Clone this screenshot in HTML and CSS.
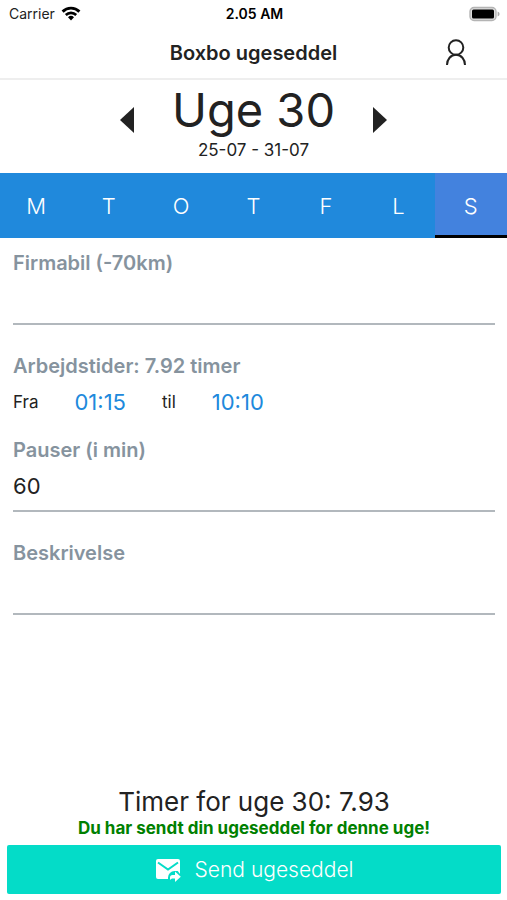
FILE: index.html
```html
<!DOCTYPE html>
<html lang="da">
<head>
<meta charset="utf-8">
<meta name="viewport" content="width=device-width, initial-scale=1">
<title>Boxbo ugeseddel</title>
<link rel="stylesheet" href="styles.css">
</head>
<body>
<div class="status">
  <div class="status-left">
    <span>Carrier</span>
    <svg class="wifi" viewBox="0 0 20 15" aria-hidden="true">
      <path d="M1.600 5.600a12 12 0 0 1 16.800 0" fill="none" stroke="#000" stroke-width="2.900"/>
      <path d="M4.800 9a7.400 7.400 0 0 1 10.400 0" fill="none" stroke="#000" stroke-width="2.600"/>
      <path d="M7 11.200a4.300 4.300 0 0 1 6 0L10 14.400z"/>
    </svg>
  </div>
  <span class="status-time">2.05 AM</span>
  <div class="status-right">
    <svg class="battery" viewBox="0 0 32 16" aria-hidden="true">
      <rect x="2" y="1.500" width="26" height="13" rx="4" fill="#ddd" stroke="#b4b4b4" stroke-width="1.400"/>
      <rect x="4" y="3.500" width="22" height="9" rx="1.500" fill="#000"/>
      <path d="M29.600 5.500q2 .8 2 2.500t-2 2.500z" fill="#aaa"/>
    </svg>
  </div>
</div>
<header class="header">
  <h1 class="title">Boxbo ugeseddel</h1>
  <button class="profile" aria-label="Profil">
    <svg viewBox="0 0 22 28" aria-hidden="true">
      <circle cx="11" cy="8.500" r="7.300"/>
      <path d="M2 26c0-5.800 3.800-10.200 9-10.200s9 4.400 9 10.200"/>
    </svg>
  </button>
</header>
<main class="main">
  <section class="week">
    <button class="arrow" aria-label="Forrige uge"><svg viewBox="0 0 14 26" aria-hidden="true"><path d="M14 0v26L0 13z"/></svg></button>
    <div class="week-text">
      <h2 class="week-name">Uge 30</h2>
      <p class="week-dates">25-07 - 31-07</p>
    </div>
    <button class="arrow" aria-label="Næste uge"><svg viewBox="0 0 14 26" aria-hidden="true"><path d="M0 0v26l14-13z"/></svg></button>
  </section>
  <nav class="days">
    <button class="day">M</button>
    <button class="day">T</button>
    <button class="day">O</button>
    <button class="day">T</button>
    <button class="day">F</button>
    <button class="day">L</button>
    <button class="day day-active">S</button>
  </nav>
  <form class="form">
    <div class="field">
      <label class="label" for="car">Firmabil (-70km)</label>
      <input class="input" id="car" type="text">
    </div>
    <div class="hours">
      <p class="label">Arbejdstider: 7.92 timer</p>
      <div class="times">
        <span>Fra</span>
        <button class="time" type="button">01:15</button>
        <span>til</span>
        <button class="time" type="button">10:10</button>
      </div>
    </div>
    <div class="field">
      <label class="label" for="breaks">Pauser (i min)</label>
      <input class="input" id="breaks" type="text" value="60">
    </div>
    <div class="field">
      <label class="label" for="description">Beskrivelse</label>
      <input class="input" id="description" type="text">
    </div>
  </form>
</main>
<footer class="footer">
  <p class="total">Timer for uge 30: 7.93</p>
  <p class="sent">Du har sendt din ugeseddel for denne uge!</p>
  <button class="send">
    <svg class="mail" viewBox="0 0 26 24" aria-hidden="true">
      <rect x="1" y="1" width="24" height="20" rx="2" fill="#fff"/>
      <path d="M3 4.500l10 7 10-7" fill="none" stroke="#04dcc8" stroke-width="2"/>
      <path d="M13 24v-4.500a6.500 6.500 0 0 1 6.500-6.500H26v11z" fill="#04dcc8"/>
      <path d="M22 12h3v4z" fill="#fff"/>
      <path fill="#fff" d="M15 22v-2.500q0-2.500 2.500-2.500H20v-3.500l5.800 5.200L20 24v-3.500h-2.800q-1.200 0-2.200 1.500z"/>
    </svg>
    <span>Send ugeseddel</span>
  </button>
</footer>
</body>
</html>
```

FILE: styles.css
```css
* {
  box-sizing: border-box;
}

body {
  display: flex;
  flex-direction: column;
  min-height: 100vh;
  margin: 0;
  background: #fff;
  color: #222;
  font-family: Inter, "Liberation Sans", sans-serif;
}

h1,
h2,
p {
  margin: 0;
  font-weight: 400;
}

button {
  padding: 0;
  border: 0;
  background: none;
  color: inherit;
  font: inherit;
}

svg {
  display: block;
}

.status {
  display: grid;
  grid-template-columns: 1fr auto 1fr;
  align-items: center;
  height: 27px;
  padding: 0 7px 0 9px;
  font-size: 14px;
}

.status-left {
  display: flex;
  align-items: center;
  gap: 6px;
}

.wifi {
  width: 20px;
  height: 15px;
}

.status-time {
  color: #000;
  font-weight: 600;
}

.status-right {
  display: flex;
  justify-content: flex-end;
}

.battery {
  width: 32px;
  height: 16px;
}

.header {
  display: grid;
  grid-template-columns: 1fr auto 1fr;
  align-items: center;
  height: 53px;
  padding: 0 40px;
  border-bottom: 2px solid #eee;
}

.title {
  grid-column: 2;
  font-size: 20px;
  font-weight: 600;
}

.profile {
  justify-self: end;
}

.profile svg {
  width: 22px;
  height: 28px;
  fill: none;
  stroke: #222;
  stroke-width: 2;
}

.main {
  flex: 1;
}

.week {
  display: flex;
  justify-content: center;
  align-items: center;
  gap: 38px;
  height: 93px;
  padding-bottom: 13px;
}

.arrow svg {
  width: 14px;
  height: 26px;
  fill: #222;
}

.week-text {
  text-align: center;
}

.week-name {
  font-size: 47px;
  line-height: 60px;
}

.week-dates {
  font-size: 17px;
  line-height: 20px;
}

.days {
  display: grid;
  grid-template-columns: repeat(7, 1fr);
  height: 65px;
  background: #2089dc;
}

.day {
  color: #fff;
  font-size: 22px;
  font-weight: 300;
}

.day-active {
  border-bottom: 3px solid #000;
  border-top: 3px solid transparent;
  background: #4382de;
}

.form {
  padding: 13px 12px 0 13px;
}

.field {
  display: flex;
  flex-direction: column;
  margin-bottom: 29px;
}

.hours {
  margin-bottom: 12px;
}

.label {
  color: #86939e;
  font-size: 20px;
  font-weight: 600;
  line-height: 24px;
}

.input {
  width: 100%;
  height: 50px;
  padding: 0;
  border: 0;
  border-bottom: 2px solid #b2b8bd;
  outline: 0;
  background: none;
  color: #222;
  font: 22px Inter, "Liberation Sans", sans-serif;
}

.times {
  display: flex;
  align-items: center;
  gap: 36px;
  height: 48px;
  font-size: 17px;
}

.time {
  color: #2089dc;
  font-size: 22px;
}

.footer {
  padding: 0 6px 6px 7px;
  text-align: center;
}

.total {
  font-size: 26px;
  line-height: 32px;
}

.sent {
  margin-bottom: 7px;
  color: #008000;
  font-size: 17px;
  font-weight: 700;
  line-height: 20px;
}

.send {
  display: flex;
  justify-content: center;
  align-items: center;
  gap: 14px;
  width: 100%;
  height: 49px;
  border-radius: 2px;
  background: #04dcc8;
  color: #fff;
  font-size: 21px;
  font-weight: 300;
}

.mail {
  width: 26px;
  height: 24px;
}
```
